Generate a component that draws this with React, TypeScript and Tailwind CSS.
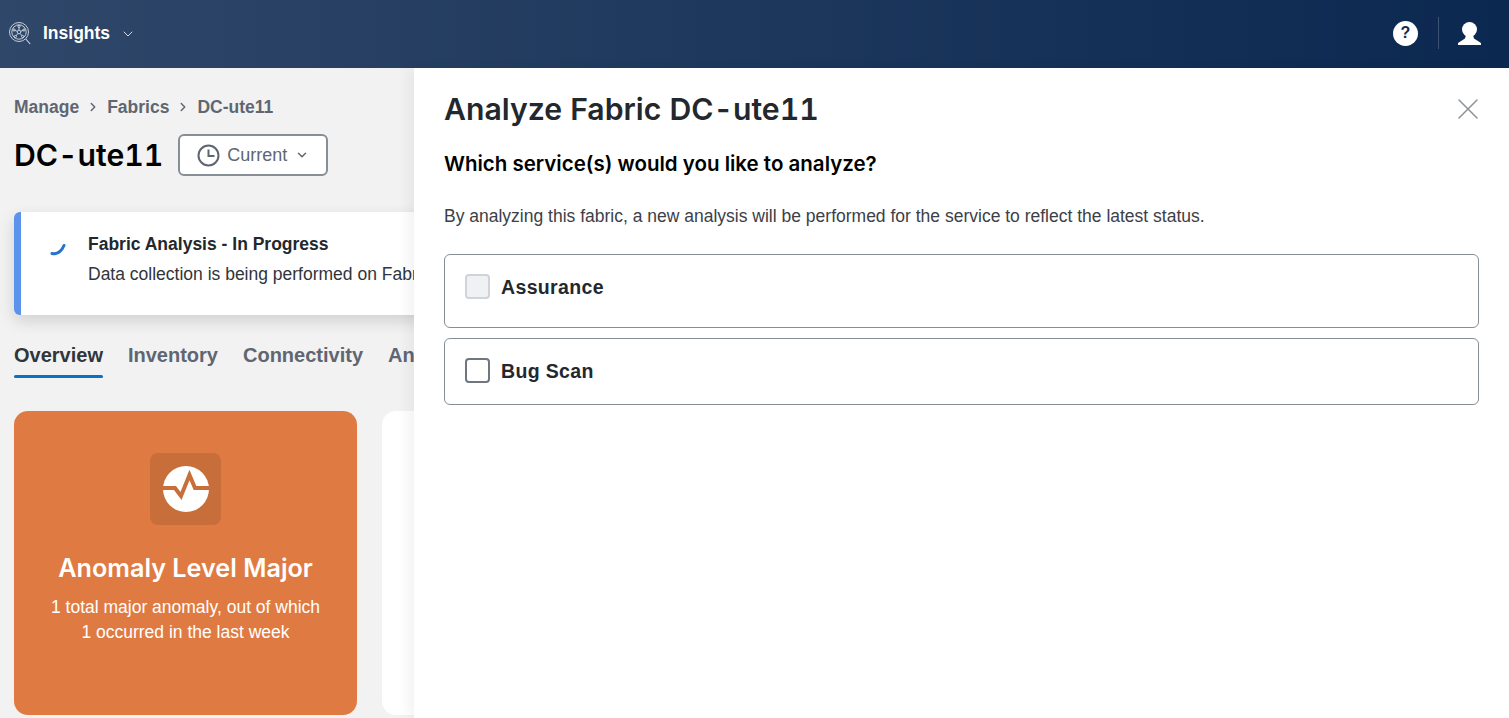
import { ChevronDown, ChevronRight, X } from "lucide-react";

const HEADING_FONT = "font-['Inter',sans-serif]";

function InsightsLogo() {
  return (
    <svg width="22" height="23" viewBox="0 0 22 23" fill="none" stroke="#d5dbe4" strokeWidth="0.9">
      <circle cx="10" cy="10" r="9.5" />
      <circle cx="10" cy="10" r="7.2" />
      <circle cx="10" cy="10" r="1.8" />
      <path d="M10 8.2V5M8.3 9.4 5.6 8.2M11.7 9.4l2.7-1.2M8.9 11.5l-2 2.4M11.1 11.5l2 2.4" />
      <circle cx="10" cy="4.4" r="1.1" />
      <circle cx="5" cy="8" r="1.1" />
      <circle cx="15" cy="8" r="1.1" />
      <circle cx="6.4" cy="14.5" r="1.1" />
      <circle cx="13.6" cy="14.5" r="1.1" />
      <path d="m16.8 17 4.4 5" strokeWidth="1.1" />
    </svg>
  );
}

function UserIcon() {
  return (
    <svg width="25" height="24" viewBox="0 0 25 24" fill="white">
      <circle cx="12.5" cy="8.5" r="7.5" />
      <path d="M9 14h7l1 3.5 7 4.5v2H1v-2l7-4.5z" />
    </svg>
  );
}

function ClockIcon() {
  return (
    <svg width="23" height="23" viewBox="0 0 23 23" fill="none" stroke="#5f6671" strokeWidth="2">
      <circle cx="11.5" cy="11.5" r="10" />
      <path d="M11.5 5.500v6.500h6" />
    </svg>
  );
}

function AnomalyIcon() {
  return (
    <svg width="46" height="46" viewBox="0 0 46 46">
      <circle cx="23" cy="23" r="23" fill="white" />
      <path d="M-1 22h13l6 8 8.500-21 5.500 13h15" fill="none" stroke="#c76e3a" strokeWidth="4" />
    </svg>
  );
}

function ServiceOption({ label, disabled, height }: { label: string; disabled?: boolean; height: string }) {
  return (
    <div className={`flex items-start rounded-md border border-[#868e96] bg-white pl-5 pt-[19px] ${height}`}>
      <span
        className={`h-[25px] w-[25px] shrink-0 rounded-[4px] border-2 ${
          disabled ? "border-[#ced4da] bg-[#f0f1f2]" : "border-[#6e7780] bg-white"
        }`}
      />
      <span className="mt-px ml-[11px] text-[19.5px] leading-[25px] font-bold tracking-[0.35px] text-[#23282e]">
        {label}
      </span>
    </div>
  );
}

export default function App() {
  return (
    <div className="relative flex h-[718px] w-[1509px] flex-col overflow-hidden bg-[#f2f2f2] font-['Liberation_Sans',sans-serif]">
      <header className="flex h-[68px] shrink-0 items-center bg-gradient-to-r from-[#2f4769] to-[#0b2850] pr-[27px] pb-[2px] pl-[9px]">
        <InsightsLogo />
        <span className="ml-[12px] text-[17.5px] font-bold text-white">Insights</span>
        <ChevronDown className="mt-[1px] ml-[10px] text-[#d5dbe4]" size={16} strokeWidth={1.5} />
        <div className="ml-auto flex items-center">
          <div className="flex h-[25px] w-[25px] items-center justify-center rounded-full bg-white text-[16px] font-bold text-[#0f2a55]">
            ?
          </div>
          <div className="mr-[18px] ml-[20px] h-[32px] w-px bg-[#3d5375]" />
          <UserIcon />
        </div>
      </header>

      <main className="flex min-h-0 flex-1 flex-col pl-[14px]">
        <nav className="mt-[29px] flex h-5 items-center text-[17.5px] font-bold text-[#5f6671]">
          <span>Manage</span>
          <ChevronRight className="mx-[7px]" size={14} strokeWidth={2.5} />
          <span>Fabrics</span>
          <ChevronRight className="mx-[7px]" size={14} strokeWidth={2.5} />
          <span>DC-ute11</span>
        </nav>

        <div className="mt-[17px] flex items-center">
          <h1 className={`text-[30.2px] leading-[42px] font-semibold text-black tabular-nums ${HEADING_FONT}`}>DC-ute11</h1>
          <button className="ml-[15px] flex h-[42px] w-[150px] items-center rounded-md border-2 border-[#868e96] bg-white pl-[17px] text-[18px] text-[#5f6671]">
            <ClockIcon />
            <span className="ml-[7px]">Current</span>
            <ChevronDown className="ml-[8px]" size={14} strokeWidth={2.5} />
          </button>
        </div>

        <div className="mt-[36px] flex h-[103px] w-[1000px] shrink-0 rounded-l-md border-l-[7px] border-[#5b93ec] bg-white shadow-[0_6px_16px_rgba(0,0,0,0.14)]">
          <svg className="mt-[30px] ml-[29px] shrink-0" width="18" height="14" viewBox="0 0 18 14" fill="none">
            <path d="M2 11.500c5 1 9-1 12-8" stroke="#2673cc" strokeWidth="3" strokeLinecap="round" />
          </svg>
          <div className="ml-[20px] pt-[22px] text-[#23282e]">
            <div className="text-[17.5px] leading-5 font-bold">Fabric Analysis - In Progress</div>
            <div className="mt-[10px] text-[17.5px] leading-5 text-[#30353b]">
              Data collection is being performed on Fabric DC-ute11
            </div>
          </div>
        </div>

        <div className="mt-[27px] flex gap-[25px] text-[20px] leading-[26px] font-bold text-[#5f6671]">
          <div className="flex h-[36px] flex-col">
            <span className="text-[#30353b]">Overview</span>
            <span className="mt-[7px] h-[3px] rounded-sm bg-[#0a72c6]" />
          </div>
          <span>Inventory</span>
          <span>Connectivity</span>
          <span>Anomalies</span>
        </div>

        <div className="mt-[33px] flex h-[304px] shrink-0 gap-[25px]">
          <section className="flex w-[343px] flex-col items-center rounded-[14px] bg-[#df7b42] pt-[42px] text-white">
            <div className="flex h-[72px] w-[71px] items-center justify-center rounded-lg bg-[#c76e3a]">
              <AnomalyIcon />
            </div>
            <h2 className={`mt-[26px] text-[25.2px] leading-[34px] font-semibold ${HEADING_FONT}`}>Anomaly Level Major</h2>
            <p className="mt-[10px] text-center text-[17.5px] leading-[25px]">
              1 total major anomaly, out of which
              <br />1 occurred in the last week
            </p>
          </section>
          <section className="w-[343px] rounded-[14px] bg-white" />
        </div>
      </main>

      <aside className="absolute top-[68px] right-0 bottom-0 left-[414px] bg-white pr-[30px] pl-[30px] shadow-[-6px_0_12px_rgba(0,0,0,0.05)]">
        <button className="absolute top-[23px] right-[23px] text-[#8d9296]">
          <X size={36} strokeWidth={1} />
        </button>
        <h2 className={`mt-[21px] text-[30.2px] leading-[40px] font-semibold text-[#23282e] tabular-nums ${HEADING_FONT}`}>
          Analyze Fabric DC-ute11
        </h2>
        <h3 className={`mt-[21px] text-[20.5px] leading-[28px] font-semibold text-black ${HEADING_FONT}`}>
          Which service(s) would you like to analyze?
        </h3>
        <p className="mt-[26px] text-[17.5px] leading-[24px] text-[#3c4047]">
          By analyzing this fabric, a new analysis will be performed for the service to reflect the latest status.
        </p>
        <div className="mt-[26px] flex flex-col gap-[10px]">
          <ServiceOption label="Assurance" disabled height="h-[74px]" />
          <ServiceOption label="Bug Scan" height="h-[67px]" />
        </div>
      </aside>
    </div>
  );
}
